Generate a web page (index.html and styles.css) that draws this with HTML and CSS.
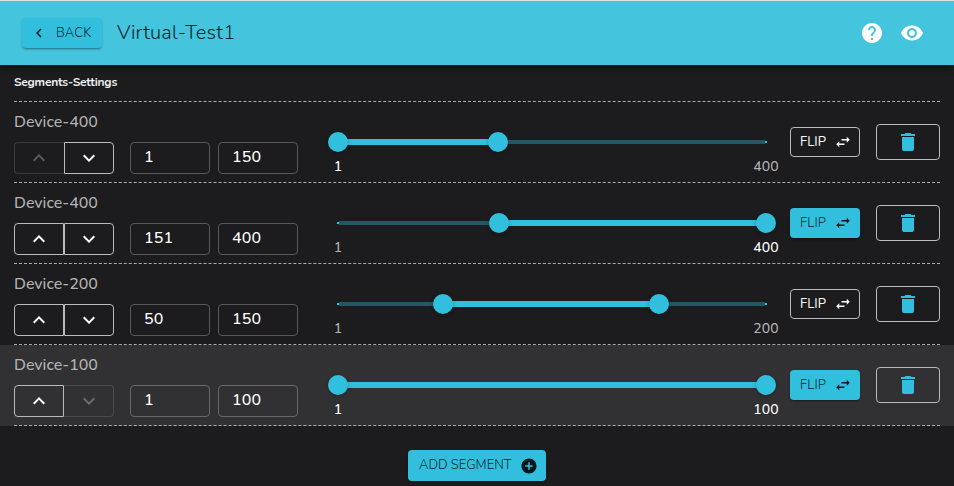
FILE: index.html
```html
<!DOCTYPE html>
<html lang="en">
<head>
<meta charset="utf-8">
<title>Virtual-Test1</title>
<link rel="stylesheet" href="styles.css">
</head>
<body>
<svg class="defs" width="0" height="0">
  <symbol id="up" viewBox="0 0 24 24"><path d="M12 8l-6 6 1.41 1.41L12 10.83l4.59 4.58L18 14z"/></symbol>
  <symbol id="down" viewBox="0 0 24 24"><path d="M16.59 8.59L12 13.17 7.41 8.59 6 10l6 6 6-6z"/></symbol>
  <symbol id="swap" viewBox="0 0 24 24"><path d="M6.99 11L3 15l3.99 4v-3H14v-2H6.99v-3zM21 9l-3.99-4v3H10v2h7.01v3L21 9z"/></symbol>
  <symbol id="trash" viewBox="0 0 24 24"><path d="M6 19c0 1.1.9 2 2 2h8c1.1 0 2-.9 2-2V7H6v12zM19 4h-3.5l-1-1h-5l-1 1H5v2h14V4z"/></symbol>
</svg>
<header class="bar">
  <button class="btn filled back"><svg class="i18" viewBox="0 0 24 24"><path d="M15.41 7.41L14 6l-6 6 6 6 1.41-1.41L10.83 12z"/></svg><span>BACK</span></button>
  <h1>Virtual-Test1</h1>
  <nav>
    <svg class="i24" viewBox="0 0 24 24"><path d="M12 2C6.48 2 2 6.48 2 12s4.48 10 10 10 10-4.480 10-10S17.520 2 12 2zm1 17h-2v-2h2v2zm2.070-7.750l-.9.920C13.450 12.900 13 13.500 13 15h-2v-.5c0-1.100.450-2.100 1.170-2.830l1.240-1.260c.370-.360.590-.860.590-1.410 0-1.100-.9-2-2-2s-2 .9-2 2H8c0-2.210 1.790-4 4-4s4 1.790 4 4c0 .880-.360 1.680-.930 2.250z"/></svg>
    <svg class="i24" viewBox="0 0 24 24"><path d="M12 4.500C7 4.500 2.730 7.610 1 12c1.730 4.390 6 7.500 11 7.500s9.270-3.110 11-7.500c-1.730-4.390-6-7.500-11-7.500zM12 17c-2.760 0-5-2.240-5-5s2.240-5 5-5 5 2.240 5 5-2.240 5-5 5zm0-8c-1.660 0-3 1.340-3 3s1.340 3 3 3 3-1.340 3-3-1.340-3-3-3z"/></svg>
  </nav>
</header>
<main>
  <h2><span>Segments-Settings</span></h2>

  <section class="row"><div class="inner">
    <div class="device"><div class="name">Device-400</div><div class="move"><button disabled><svg class="i24"><use href="#up"/></svg></button><button><svg class="i24"><use href="#down"/></svg></button></div></div>
    <div class="field">1</div><div class="field">150</div>
    <div class="slider" style="--a:0%;--b:37.4%"><i class="rail"></i><i class="track"></i><i class="thumb from"></i><i class="thumb to"></i><b class="min on">1</b><b class="max">400</b></div>
    <button class="btn outline flip"><span>FLIP</span><svg class="i18"><use href="#swap"/></svg></button>
    <button class="delete"><svg class="i24"><use href="#trash"/></svg></button>
  </div></section>

  <section class="row"><div class="inner">
    <div class="device"><div class="name">Device-400</div><div class="move"><button><svg class="i24"><use href="#up"/></svg></button><button><svg class="i24"><use href="#down"/></svg></button></div></div>
    <div class="field">151</div><div class="field">400</div>
    <div class="slider" style="--a:37.6%;--b:100%"><i class="rail"></i><i class="track"></i><i class="thumb from"></i><i class="thumb to"></i><b class="min">1</b><b class="max on">400</b></div>
    <button class="btn filled flip"><span>FLIP</span><svg class="i18"><use href="#swap"/></svg></button>
    <button class="delete"><svg class="i24"><use href="#trash"/></svg></button>
  </div></section>

  <section class="row"><div class="inner">
    <div class="device"><div class="name">Device-200</div><div class="move"><button><svg class="i24"><use href="#up"/></svg></button><button><svg class="i24"><use href="#down"/></svg></button></div></div>
    <div class="field">50</div><div class="field">150</div>
    <div class="slider" style="--a:24.6%;--b:74.9%"><i class="rail"></i><i class="track"></i><i class="thumb from"></i><i class="thumb to"></i><b class="min">1</b><b class="max">200</b></div>
    <button class="btn outline flip"><span>FLIP</span><svg class="i18"><use href="#swap"/></svg></button>
    <button class="delete"><svg class="i24"><use href="#trash"/></svg></button>
  </div></section>

  <section class="row active"><div class="inner">
    <div class="device"><div class="name">Device-100</div><div class="move"><button><svg class="i24"><use href="#up"/></svg></button><button disabled><svg class="i24"><use href="#down"/></svg></button></div></div>
    <div class="field">1</div><div class="field">100</div>
    <div class="slider" style="--a:0%;--b:100%"><i class="rail"></i><i class="track"></i><i class="thumb from"></i><i class="thumb to"></i><b class="min on">1</b><b class="max on">100</b></div>
    <button class="btn filled flip"><span>FLIP</span><svg class="i18"><use href="#swap"/></svg></button>
    <button class="delete"><svg class="i24"><use href="#trash"/></svg></button>
  </div></section>

  <button class="btn filled add"><span>ADD SEGMENT</span><svg class="i18" viewBox="0 0 24 24"><path d="M12 2C6.480 2 2 6.480 2 12s4.480 10 10 10 10-4.480 10-10S17.520 2 12 2zm5 11h-4v4h-2v-4H7v-2h4V7h2v4h4v2z"/></svg></button>
</main>
</body>
</html>
```
FILE: styles.css
```css
* { box-sizing: border-box; }
body {
  margin: 0;
  height: 486px;
  overflow: hidden;
  background: #1c1c1e;
  color: #fff;
  font-family: Nunito, Lato, "Open Sans", sans-serif;
}
.defs { position: absolute; }
svg { fill: currentColor; flex: none; display: block; }
.i18 { width: 18px; height: 18px; }
.i24 { width: 24px; height: 24px; }
button { font-family: inherit; background: none; border: 0; padding: 0; margin: 0; color: inherit; }

.bar {
  height: 65px;
  display: flex;
  align-items: center;
  background: #44c4dd;
  border-top: 1px solid #d5e3e5;
  padding: 0 30px 0 22px;
  box-shadow: 0 2px 5px rgba(0, 0, 0, .5);
}
.bar h1 {
  margin: 0 0 0 15px;
  font-size: 20px;
  line-height: 32px;
  font-weight: 300;
  letter-spacing: .19px;
  color: #06262c;
}
.bar nav { margin-left: auto; display: flex; gap: 16px; }

.btn {
  display: flex;
  align-items: center;
  border-radius: 4px;
  font-size: 13px;
  line-height: 23px;
  letter-spacing: .2px;
}
.filled {
  background: #31bfdd;
  color: #04191d;
  box-shadow: 0 2px 2px -1px rgba(0, 0, 0, .35), 0 1px 3px rgba(0, 0, 0, .12);
}
.filled span { color: #06262c; font-weight: 300; }
.outline { border: 1px solid #bbb; letter-spacing: .05px; }
.back { width: 80px; height: 30px; padding-left: 8px; gap: 8px; }

h2 {
  margin: 0 14px;
  height: 37px;
  border-bottom: 1px dashed #aaa;
  font-size: 12px;
  line-height: 34px;
  font-weight: 700;
  letter-spacing: -.24px;
  color: #eee;
}
.row { height: 81px; padding: 0 14px; }
.active { background: #313133; }
.inner {
  height: 81px;
  display: flex;
  align-items: flex-start;
  border-bottom: 1px dashed #aaa;
}
.device { width: 116px; }
.name { height: 40px; font-size: 16px; line-height: 41px; font-weight: 500; letter-spacing: -.02px; color: #b3b3b3; }
.move { display: flex; width: 100px; height: 32px; }
.move button {
  width: 50px;
  display: flex;
  align-items: center;
  justify-content: center;
  border: 1px solid #bbb;
}
.move button:first-child { border-radius: 4px 0 0 4px; }
.move button:last-child { border-radius: 0 4px 4px 0; }
.move button:disabled { border-color: #3b3b3d; color: #5b5b5d; }
.active .move button:disabled { border-color: #4b4b4d; color: #6b6b6d; }
.move button:first-child:disabled { border-right: 0; padding-right: 1px; }
.move button:last-child:disabled { border-left: 0; padding-left: 1px; }
.field {
  width: 80px;
  height: 32px;
  margin: 40px 8px 0 0;
  padding-left: 13px;
  border: 1px solid #58585a;
  border-radius: 4px;
  font-size: 16px;
  line-height: 29px;
  font-weight: 500;
  letter-spacing: .1px;
}
.active .field { border-color: #68686a; line-height: 28px; }

.slider { position: relative; width: 428px; height: 80px; margin: 0 24px 0 32px; }
.slider i { position: absolute; }
.rail { left: 0; right: 0; top: 38px; height: 4px; border-radius: 2px; background: #255866; }
.rail::before, .rail::after {
  content: "";
  position: absolute;
  top: 1px;
  width: 2px;
  height: 2px;
  background: #31bfdd;
}
.rail::before { left: -1px; }
.rail::after { right: -1px; }
.track { left: var(--a); width: calc(var(--b) - var(--a)); top: 37px; height: 6px; background: #31bfdd; }
.thumb {
  width: 20px;
  height: 20px;
  top: 30px;
  margin-left: -10px;
  border-radius: 50%;
  background: #31bfdd;
  box-shadow: 0 1px 4px rgba(0, 0, 0, .25);
}
.from { left: var(--a); }
.to { left: var(--b); }
.slider b {
  position: absolute;
  top: 55px;
  transform: translateX(-50%);
  font-size: 14px;
  line-height: 20px;
  font-weight: 500;
  letter-spacing: .15px;
  color: #b3b3b3;
}
.slider b.on { color: #fff; }
.min { left: 0; }
.max { left: 100%; }

.flip { width: 70px; height: 30px; margin-top: 25px; padding-left: 10px; }
.flip span { width: 34px; text-align: left; }
.outline.flip { padding-left: 9px; }
.delete {
  width: 64px;
  height: 36px;
  margin: 22px 0 0 16px;
  display: flex;
  align-items: center;
  justify-content: center;
  border: 1px solid #bbb;
  border-radius: 4px;
  color: #31bfdd;
}
.add { width: 138px; height: 31px; margin: 24px auto 0; padding-left: 11px; letter-spacing: .02px; }
.add span { width: 101px; text-align: left; white-space: nowrap; }
```
